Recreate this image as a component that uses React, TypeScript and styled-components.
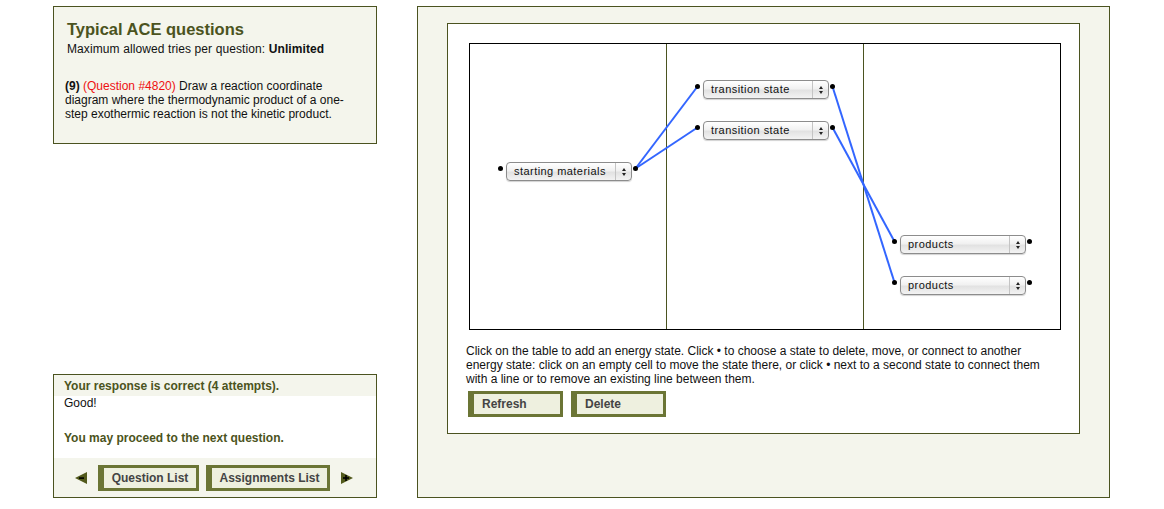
import * as React from "react";
import styled, { createGlobalStyle } from "styled-components";

const colors = {
  olive: "#4b5320",
  oliveButton: "#6b7535",
  panelBg: "#f4f5ec",
  buttonBg: "#eef0df",
  line: "#3366ff",
  text: "#111111",
  buttonText: "#444444",
};

const GlobalStyle = createGlobalStyle`
  html, body {
    margin: 0;
    padding: 0;
    background: #ffffff;
    font-family: "Liberation Sans", Arial, sans-serif;
    color: ${colors.text};
  }
`;

const Page = styled.div`
  display: flex;
  align-items: flex-start;
  gap: 40px;
  padding: 6px 0 0 53px;
`;

const LeftColumn = styled.div`
  display: flex;
  flex-direction: column;
  justify-content: space-between;
  width: 324px;
  height: 492px;
`;

const InfoPanel = styled.div`
  box-sizing: border-box;
  height: 138px;
  padding: 12px 14px 0 13px;
  background: ${colors.panelBg};
  border: 1px solid ${colors.olive};
`;

const Title = styled.div`
  font-size: 16.5px;
  line-height: 20px;
  font-weight: bold;
  color: ${colors.olive};
`;

const TriesLine = styled.div`
  margin-top: 3px;
  font-size: 12px;
  letter-spacing: 0.1px;
  line-height: 14px;
`;

const QuestionText = styled.div`
  margin: 23px 0 0 -2px;
  font-size: 12px;
  line-height: 14px;
`;

const QuestionRef = styled.span`
  color: #ee1111;
`;

const FeedbackPanel = styled.div`
  box-sizing: border-box;
  height: 124px;
  display: flex;
  flex-direction: column;
  background: ${colors.panelBg};
  border: 1px solid ${colors.olive};
`;

const FeedbackHeader = styled.div`
  height: 21px;
  padding-left: 10px;
  font-size: 12px;
  line-height: 23px;
  font-weight: bold;
  color: ${colors.olive};
`;

const FeedbackBody = styled.div`
  height: 62px;
  padding-left: 10px;
  background: #ffffff;
  font-size: 12px;
  line-height: 15px;
`;

const ProceedText = styled.div`
  margin-top: 20px;
  font-weight: bold;
  color: ${colors.olive};
`;

const FeedbackFooter = styled.div`
  flex: 1;
  display: flex;
  align-items: center;
  padding-left: 21px;
  gap: 11px;
`;

const ButtonGroup = styled.div`
  display: flex;
  gap: 7px;
`;

const OliveButton = styled.button<{ $width: number }>`
  box-sizing: border-box;
  width: ${(p) => p.$width}px;
  height: 26px;
  padding: 0 0 0 8px;
  text-align: left;
  background: ${colors.buttonBg};
  border: 3px solid ${colors.oliveButton};
  border-left-width: 6px;
  font-family: "Liberation Sans", Arial, sans-serif;
  font-size: 12px;
  font-weight: bold;
  color: ${colors.buttonText};
  cursor: pointer;
`;

const CenteredButton = styled(OliveButton)`
  padding: 0;
  text-align: center;
`;

const NavArrow = styled.svg`
  display: block;
  width: 12px;
  height: 12px;
`;

const RightPanel = styled.div`
  box-sizing: border-box;
  width: 693px;
  height: 492px;
  padding: 16px 0 0 29px;
  background: ${colors.panelBg};
  border: 1px solid ${colors.olive};
`;

const Workspace = styled.div`
  box-sizing: border-box;
  width: 633px;
  height: 411px;
  padding: 19px 0 0 18px;
  background: #ffffff;
  border: 1px solid ${colors.olive};
`;

const DiagramTable = styled.div`
  position: relative;
  box-sizing: border-box;
  width: 592px;
  height: 287px;
  margin-left: 3px;
  display: grid;
  grid-template-columns: 197px 197px 1fr;
  border: 1px solid #000000;
`;

const Column = styled.div<{ $last?: boolean }>`
  border-right: ${(p) => (p.$last ? "none" : `1px solid ${colors.olive}`)};
`;

const Lines = styled.svg`
  position: absolute;
  left: 0;
  top: 0;
  width: 100%;
  height: 100%;
  pointer-events: none;
`;

const StateNode = styled.div`
  position: absolute;
  display: flex;
  align-items: flex-start;
`;

const Dot = styled.span`
  width: 5px;
  height: 5px;
  margin-top: 4px;
  border-radius: 50%;
  background: #000000;
`;

const PopupSelect = styled.div`
  box-sizing: border-box;
  display: flex;
  width: 126px;
  height: 19px;
  margin: 0 1px 0 3px;
  border: 1px solid #8c8c8c;
  border-radius: 4px;
  background: linear-gradient(#ffffff 0%, #f1f1f1 45%, #e2e2e2 55%, #f3f3f3 100%);
  box-shadow: 0 1px 1px rgba(0, 0, 0, 0.18);
`;

const SelectLabel = styled.span`
  flex: 1;
  padding-left: 7px;
  font-family: "Liberation Sans", Arial, sans-serif;
  font-size: 11px;
  letter-spacing: 0.45px;
  line-height: 17px;
  color: #111111;
`;

const SelectArrows = styled.span`
  width: 15px;
  border-left: 1px solid #c4c4c4;
  display: flex;
  flex-direction: column;
  align-items: center;
  justify-content: center;
  gap: 2px;
`;

const Triangle = styled.span<{ $down?: boolean }>`
  width: 0;
  height: 0;
  border-left: 2.5px solid transparent;
  border-right: 2.5px solid transparent;
  ${(p) => (p.$down ? "border-top: 3px solid #222;" : "border-bottom: 3px solid #222;")}
`;

const Instructions = styled.p`
  width: 590px;
  margin: 14px 0 0 0;
  font-size: 12px;
  line-height: 14px;
`;

const ActionRow = styled.div`
  display: flex;
  gap: 8px;
  margin: 5px 0 0 2px;
`;

type State = { label: string; x: number; y: number };

const states: State[] = [
  { label: "starting materials", x: 28, y: 118 },
  { label: "transition state", x: 225, y: 36 },
  { label: "transition state", x: 225, y: 77 },
  { label: "products", x: 422, y: 191 },
  { label: "products", x: 422, y: 232 },
];

// connections: from right dot of one state to left dot of another
const links: [number, number][] = [
  [0, 1],
  [0, 2],
  [1, 4],
  [2, 3],
];

const rightDot = (s: State) => ({ x: s.x + 137.5, y: s.y + 6.5 });
const leftDot = (s: State) => ({ x: s.x + 2.5, y: s.y + 6.5 });

const Popup: React.FC<{ label: string }> = ({ label }) => (
  <PopupSelect>
    <SelectLabel>{label}</SelectLabel>
    <SelectArrows>
      <Triangle />
      <Triangle $down />
    </SelectArrows>
  </PopupSelect>
);

const LeftArrow = () => (
  <NavArrow viewBox="0 0 12 12">
    <polygon points="0,6 12,0 12,12" fill="#525a1c" />
    <rect x="4" y="5.3" width="5" height="1.6" fill="#000" />
  </NavArrow>
);

const RightArrow = () => (
  <NavArrow viewBox="0 0 12 12">
    <polygon points="0,0 12,6 0,12" fill="#525a1c" />
    <rect x="2" y="5.2" width="6" height="1.6" fill="#000" />
    <rect x="4.2" y="3" width="1.6" height="6" fill="#000" />
  </NavArrow>
);

export default function App() {
  return (
    <>
      <GlobalStyle />
      <Page>
        <LeftColumn>
          <InfoPanel>
            <Title>Typical ACE questions</Title>
            <TriesLine>
              Maximum allowed tries per question: <b>Unlimited</b>
            </TriesLine>
            <QuestionText>
              <b>(9)</b> <QuestionRef>(Question #4820)</QuestionRef> Draw a reaction coordinate
              diagram where the thermodynamic product of a one-step exothermic reaction is not
              the kinetic product.
            </QuestionText>
          </InfoPanel>
          <FeedbackPanel>
            <FeedbackHeader>Your response is correct (4 attempts).</FeedbackHeader>
            <FeedbackBody>
              Good!
              <ProceedText>You may proceed to the next question.</ProceedText>
            </FeedbackBody>
            <FeedbackFooter>
              <LeftArrow />
              <ButtonGroup>
                <CenteredButton $width={101}>Question List</CenteredButton>
                <CenteredButton $width={124}>Assignments List</CenteredButton>
              </ButtonGroup>
              <RightArrow />
            </FeedbackFooter>
          </FeedbackPanel>
        </LeftColumn>
        <RightPanel>
          <Workspace>
            <DiagramTable>
              <Column />
              <Column />
              <Column $last />
              <Lines>
                {links.map(([a, b], i) => {
                  const p = rightDot(states[a]);
                  const q = leftDot(states[b]);
                  return (
                    <line
                      key={i}
                      x1={p.x}
                      y1={p.y}
                      x2={q.x}
                      y2={q.y}
                      stroke={colors.line}
                      strokeWidth={2}
                    />
                  );
                })}
              </Lines>
              {states.map((s, i) => (
                <StateNode key={i} style={{ left: s.x, top: s.y }}>
                  <Dot />
                  <Popup label={s.label} />
                  <Dot />
                </StateNode>
              ))}
            </DiagramTable>
            <Instructions>
              Click on the table to add an energy state. Click • to choose a state to delete,
              move, or connect to another energy state: click on an empty cell to move the state
              there, or click • next to a second state to connect them with a line or to remove
              an existing line between them.
            </Instructions>
            <ActionRow>
              <OliveButton $width={95}>Refresh</OliveButton>
              <OliveButton $width={95}>Delete</OliveButton>
            </ActionRow>
          </Workspace>
        </RightPanel>
      </Page>
    </>
  );
}
